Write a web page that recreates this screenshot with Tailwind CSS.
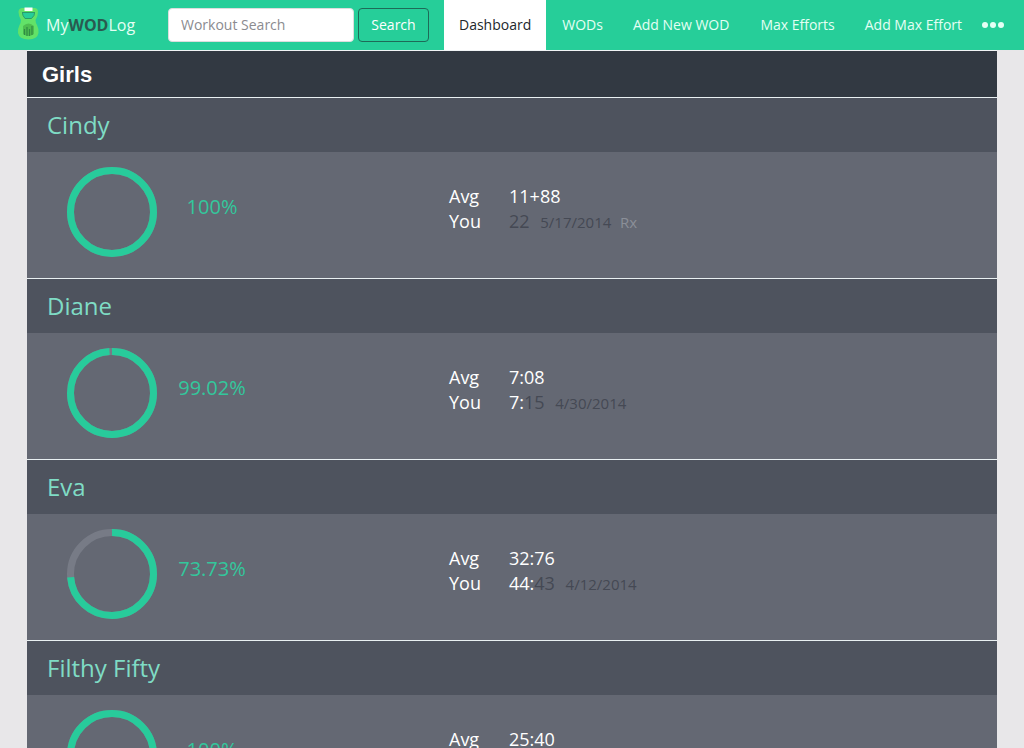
<!DOCTYPE html>
<html lang="en">
<head>
<meta charset="utf-8">
<meta name="viewport" content="width=device-width, initial-scale=1">
<title>MyWODLog</title>
<script src="https://cdn.jsdelivr.net/npm/@tailwindcss/browser@4"></script>
</head>
<body class="min-h-screen bg-[#e8e7e9] font-['Open_Sans','Noto_Sans',sans-serif] text-white">
<header class="flex h-[50px] items-center bg-[#26ce99] text-sm">
  <a href="#" class="flex w-[168px] shrink-0 items-center gap-1.5 pl-[17px] text-base text-[#e4fff4]">
    <svg class="mb-1 h-[34px] w-[23px] shrink-0" viewBox="0 0 23 34" aria-hidden="true">
      <path fill-rule="evenodd" d="M5 2H18Q21 2.500 21 6 21 10 18.500 14 18.500 16.500 20 19 22 23 21.500 27 20.500 33 11.500 33.500 2 33 1 27 0.500 23 2.500 19 4 16.500 4 14 1.500 10 1.500 6 1.500 2.500 5 2ZM5.500 6 6 9.500 8 12.500H14.500L17 9.500 17.500 6Z" fill="#62e268"/>
      <path d="M5 6.500H18M5.500 7 6 9.500 8 12.500H14.500L17 9.500 17.500 7" fill="none" stroke="#299d68" stroke-width="1"/>
      <path d="M7.500 1.500H15.500V5H7.500Z" fill="#fff"/>
      <path d="M6 20Q11.500 15 17 20V28Q11.500 32 6 28Z" fill="#4dbd50"/>
      <path d="M7.500 23V29M10 21V30M12.500 23V30M15 20V29" stroke="#2f8c44" stroke-width="1.200"/>
    </svg>
    <span>My<b class="text-[#2a5a50]">WOD</b>Log</span>
  </a>
  <form class="flex shrink-0 gap-1" onsubmit="return false">
    <input type="text" aria-label="Workout Search" placeholder="Workout Search" class="h-[34px] w-[186px] rounded border border-[#ddd] bg-white px-3 pb-0.5 text-sm text-[#555] placeholder:text-[#8b8b8f]">
    <button type="submit" class="h-[34px] w-[71px] rounded border border-[#1e6b58] text-sm">Search</button>
  </form>
  <nav class="ml-[15px] flex h-full items-center whitespace-nowrap text-[#e4fff4]">
    <a href="#" class="flex h-full items-center bg-white px-[15px] text-[#22272b]">Dashboard</a>
    <a href="#" class="pr-[15px] pl-4">WODs</a>
    <a href="#" class="px-[15px]">Add New WOD</a>
    <a href="#" class="pr-[15px] pl-4">Max Efforts</a>
    <a href="#" class="px-[15px]">Add Max Effort</a>
    <button type="button" aria-label="More" class="pl-1"><svg class="h-2 w-6" viewBox="0 0 24 8" fill="currentColor"><circle cx="4" cy="4" r="3"/><circle cx="12" cy="4" r="3"/><circle cx="20" cy="4" r="3"/></svg></button>
  </nav>
</header>
<main class="mx-[27px]">
  <h1 class="h-[47px] border-t border-[#f1f4f5] bg-[#323942] px-[15px] font-['Liberation_Sans',Arial,sans-serif] text-[22px] leading-[48px] font-bold">Girls</h1>

  <section class="border-t border-[#e9f0f2]">
    <h2 class="h-[54px] bg-[#4e535e] px-5 text-2xl leading-[54px] text-[#7fdcc5]">Cindy</h2>
    <div class="flex h-[126px] bg-[#646873] pl-10 pt-[15px]">
      <svg class="size-[90px] -rotate-90" viewBox="0 0 90 90" fill="none" stroke-width="7"><circle cx="45" cy="45" r="41.500" stroke="#777b86"/><circle cx="45" cy="45" r="41.500" stroke="#28cb9b" pathLength="100" stroke-dasharray="100 0"/></svg>
      <p class="w-[110px] pt-[26px] text-center text-xl leading-7 text-[#33c79c]">100%</p>
      <dl class="ml-[182px] grid grid-cols-[60px_auto] content-start pt-[17px] text-lg leading-[25px]">
        <dt>Avg</dt><dd>11+88</dd>
        <dt>You</dt><dd class="text-[#454954]">22 <span class="ml-1.5 text-[15px]">5/17/2014</span> <span class="ml-1 text-[15px] text-[#8b8f98]">Rx</span></dd>
      </dl>
    </div>
  </section>

  <section class="border-t border-[#e9f0f2]">
    <h2 class="h-[54px] bg-[#4e535e] px-5 text-2xl leading-[54px] text-[#7fdcc5]">Diane</h2>
    <div class="flex h-[126px] bg-[#646873] pl-10 pt-[15px]">
      <svg class="size-[90px] -rotate-90" viewBox="0 0 90 90" fill="none" stroke-width="7"><circle cx="45" cy="45" r="41.500" stroke="#777b86"/><circle cx="45" cy="45" r="41.500" stroke="#28cb9b" pathLength="100" stroke-dasharray="99.02 0.98"/></svg>
      <p class="w-[110px] pt-[26px] text-center text-xl leading-7 text-[#33c79c]">99.02%</p>
      <dl class="ml-[182px] grid grid-cols-[60px_auto] content-start pt-[17px] text-lg leading-[25px]">
        <dt>Avg</dt><dd>7:08</dd>
        <dt>You</dt><dd>7:<span class="text-[#454954]">15 <span class="ml-1.5 text-[15px]">4/30/2014</span></span></dd>
      </dl>
    </div>
  </section>

  <section class="border-t border-[#e9f0f2]">
    <h2 class="h-[54px] bg-[#4e535e] px-5 text-2xl leading-[54px] text-[#7fdcc5]">Eva</h2>
    <div class="flex h-[126px] bg-[#646873] pl-10 pt-[15px]">
      <svg class="size-[90px] -rotate-90" viewBox="0 0 90 90" fill="none" stroke-width="7"><circle cx="45" cy="45" r="41.500" stroke="#777b86"/><circle cx="45" cy="45" r="41.500" stroke="#28cb9b" pathLength="100" stroke-dasharray="73.73 26.27"/></svg>
      <p class="w-[110px] pt-[26px] text-center text-xl leading-7 text-[#33c79c]">73.73%</p>
      <dl class="ml-[182px] grid grid-cols-[60px_auto] content-start pt-[17px] text-lg leading-[25px]">
        <dt>Avg</dt><dd>32:76</dd>
        <dt>You</dt><dd>44:<span class="text-[#454954]">43 <span class="ml-1.5 text-[15px]">4/12/2014</span></span></dd>
      </dl>
    </div>
  </section>

  <section class="border-t border-[#e9f0f2]">
    <h2 class="h-[54px] bg-[#4e535e] px-5 text-2xl leading-[54px] text-[#7fdcc5]">Filthy Fifty</h2>
    <div class="flex h-[126px] bg-[#646873] pl-10 pt-[15px]">
      <svg class="size-[90px] -rotate-90" viewBox="0 0 90 90" fill="none" stroke-width="7"><circle cx="45" cy="45" r="41.500" stroke="#777b86"/><circle cx="45" cy="45" r="41.500" stroke="#28cb9b" pathLength="100" stroke-dasharray="100 0"/></svg>
      <p class="w-[110px] pt-[26px] text-center text-xl leading-7 text-[#33c79c]">100%</p>
      <dl class="ml-[182px] grid grid-cols-[60px_auto] content-start pt-[17px] text-lg leading-[25px]">
        <dt>Avg</dt><dd>25:40</dd>
      </dl>
    </div>
  </section>
</main>
</body>
</html>
